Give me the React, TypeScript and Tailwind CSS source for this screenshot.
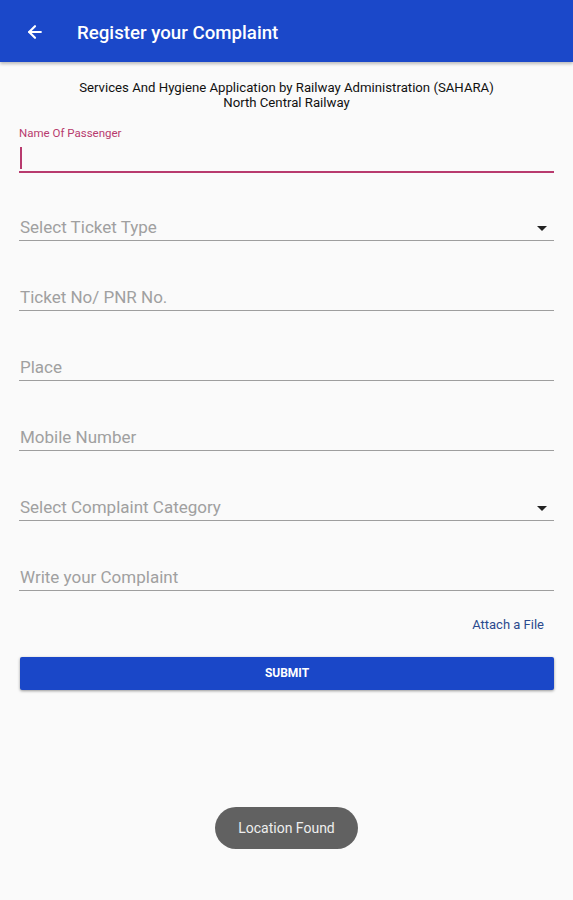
import { ArrowLeft } from "lucide-react";

const fields = [
  { label: "Select Ticket Type", dropdown: true },
  { label: "Ticket No/ PNR No.", dropdown: false },
  { label: "Place", dropdown: false },
  { label: "Mobile Number", dropdown: false },
  { label: "Select Complaint Category", dropdown: true },
  { label: "Write your Complaint", dropdown: false },
];

export default function App() {
  return (
    <div
      className="relative w-[573px] h-[900px] bg-[#fafafa] overflow-hidden"
      style={{ fontFamily: "Roboto, 'Liberation Sans', sans-serif" }}
    >
      {/* APP BAR */}
      <div className="h-[62px] bg-[#1b48c9] flex items-center shadow-[0_2px_3px_rgba(0,0,0,0.25)]">
        <ArrowLeft className="w-[20px] h-[20px] ml-[25px] mt-[2px] text-white" strokeWidth={2.6} />
        <h1 className="ml-[32px] mt-[4px] text-[18.7px] font-medium text-white">
          Register your Complaint
        </h1>
      </div>

      {/* SUBTITLE */}
      <div className="mt-[18px] text-center text-[13.2px] leading-[15px] text-[#111]">
        <p>Services And Hygiene Application by Railway Administration (SAHARA)</p>
        <p>North Central Railway</p>
      </div>

      <div className="px-[19px]">
        {/* NAME FIELD (focused) */}
        <div className="mt-[16px]">
          <p className="text-[11.5px] leading-[14px] text-[#b83a6e]">Name Of Passenger</p>
          <div className="h-[31px] flex items-center">
            <div className="w-[2px] h-[22px] bg-[#b83a6e] ml-[1px] mt-[4px]" />
          </div>
          <div className="h-[2px] bg-[#b83a6e]" />
        </div>

        {/* OTHER FIELDS */}
        {fields.map((f, i) => (
          <div key={i} className={i === 0 ? "mt-[42px]" : "mt-[44px]"}>
            <div className="h-[26px] flex items-center justify-between pl-[1px]">
              <span className="text-[17px] text-[#a0a0a0]">{f.label}</span>
              {f.dropdown && (
                <svg width="10" height="5" viewBox="0 0 10 5" className="mr-[7px]">
                  <path d="M0 0h10L5 5z" fill="#222" />
                </svg>
              )}
            </div>
            <div className="h-[1px] bg-[#9e9e9e] mt-[-1px]" />
          </div>
        ))}

        {/* ATTACH */}
        <div className="flex justify-end mt-[24px] pr-[10px]">
          <span className="text-[13px] text-[#2b4a8e]">Attach a File</span>
        </div>

        {/* SUBMIT */}
        <button className="mt-[22px] ml-[1px] w-[534px] h-[33px] bg-[#1a47c8] text-white text-[12px] font-bold rounded-[2px] shadow-[0_1px_3px_rgba(0,0,0,0.4)]">
          SUBMIT
        </button>
      </div>

      {/* TOAST */}
      <div className="absolute left-[215px] top-[807px] w-[143px] h-[42px] rounded-full bg-[#616161] flex items-center justify-center">
        <span className="text-[14px] text-[#eeeeee]">Location Found</span>
      </div>
    </div>
  );
}
